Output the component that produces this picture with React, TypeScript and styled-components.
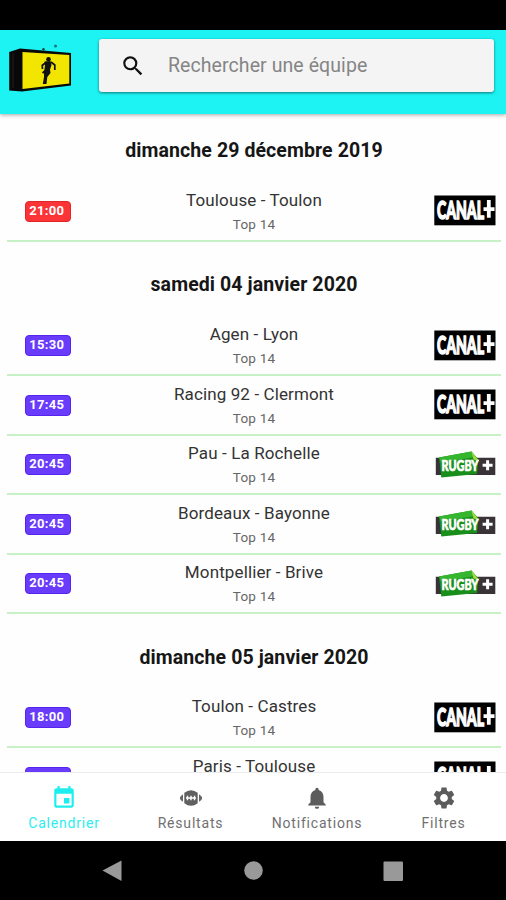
import React from "react";
import styled, { createGlobalStyle } from "styled-components";
import { MdEvent, MdNotifications, MdSearch, MdSettings } from "react-icons/md";

const GlobalStyle = createGlobalStyle`
  * { box-sizing: border-box; }
  html, body { margin: 0; padding: 0; background: #000; }
  body { font-family: Roboto, "Liberation Sans", sans-serif; }
`;

const Screen = styled.div`
  display: flex;
  flex-direction: column;
  width: 506px;
  height: 900px;
  overflow: hidden;
  background: #fefefe;
`;

const StatusBar = styled.div`
  flex: 0 0 29.5px;
  background: #000;
`;

const Header = styled.header`
  flex: 0 0 84px;
  display: flex;
  align-items: flex-start;
  padding: 9.5px 12px 0 8px;
  background: #1ef3f3;
  box-shadow: 0 1px 4px rgba(0, 0, 0, 0.35);
  z-index: 1;
`;

const Logo = styled.svg`
  flex: 0 0 66px;
  height: 54px;
  margin-right: 25px;
`;

const SearchField = styled.label`
  flex: 1;
  display: flex;
  align-items: center;
  height: 53px;
  padding-left: 21px;
  border-radius: 3px;
  background: #f4f4f4;
  box-shadow: 0 1px 3px rgba(0, 40, 40, 0.6);

  svg {
    flex: none;
    width: 26px;
    height: 26px;
    margin-right: 22px;
    color: #111;
  }
`;

const SearchInput = styled.input`
  flex: 1;
  min-width: 0;
  padding: 0;
  border: 0;
  outline: 0;
  background: transparent;
  font: 400 19.5px Roboto, sans-serif;
  letter-spacing: 0.08px;

  &::placeholder { color: #858585; opacity: 1; }
`;

const List = styled.main`
  flex: 1;
  min-height: 0;
  overflow: hidden;
  padding: 0 5px 0 7px;
  margin-top: -6px;
`;

const DayTitle = styled.h2`
  height: 74.8px;
  margin: 0;
  padding-top: 31.5px;
  text-align: center;
  font-size: 19.5px;
  line-height: 24px;
  font-weight: 700;
  letter-spacing: 0.1px;
  color: #161616;
`;

const Row = styled.div`
  display: grid;
  grid-template-columns: 82px 1fr 82px;
  height: 59.5px;
  border-bottom: 2px solid #c5f1c4;
`;

const TimeBadge = styled.span<{ $live?: boolean }>`
  justify-self: start;
  width: 46.5px;
  height: 21px;
  margin: 18.5px 0 0 17.5px;
  border: 1px solid ${(p) => (p.$live ? "#e32528" : "#5525ee")};
  border-radius: 4px;
  background: ${(p) => (p.$live ? "#fb3438" : "#693bfb")};
  color: #fff;
  font-size: 13px;
  line-height: 18px;
  font-weight: 700;
  letter-spacing: 0.3px;
  text-align: center;
  padding-right: 2px;
`;

const Fixture = styled.div`
  padding-top: 6.6px;
  text-align: center;
  white-space: nowrap;
`;

const Teams = styled.div`
  font-size: 17px;
  line-height: 22px;
  letter-spacing: 0.12px;
  color: #333;
`;

const Competition = styled.div`
  margin-top: 3px;
  font-size: 13.5px;
  line-height: 20px;
  letter-spacing: 0.2px;
  color: #666;
`;

const Channel = styled.svg`
  justify-self: end;
  width: 62px;
  height: 31px;
  margin: 13px 5.5px 0 0;
  overflow: visible;
`;

const TabBar = styled.nav`
  flex: 0 0 69.5px;
  display: grid;
  grid-template-columns: repeat(4, 1fr);
  border-top: 1px solid #ececec;
  background: #fff;
  z-index: 1;
`;

const Tab = styled.div<{ $active?: boolean }>`
  display: flex;
  flex-direction: column;
  align-items: center;
  padding: 12px 0 0 1.5px;
  color: ${(p) => (p.$active ? "#2ceeee" : "#707070")};
  font-size: 14px;
  line-height: 18px;
  letter-spacing: 0.8px;

  svg {
    width: 26px;
    height: 26px;
    margin-bottom: 3px;
    color: ${(p) => (p.$active ? "#1eeeee" : "#5c5c5c")};
  }
`;

const SystemBar = styled.div`
  flex: 0 0 59px;
  background: #000;

  svg { display: block; }
`;

function AppLogo() {
  return (
    <Logo viewBox="0 0 66 54">
      <path d="M1.2 13 12 9.5 63 14V46.5L14 52.5 1.2 51.5Z" fill="#080808" />
      <path d="M5 14v35" stroke="#202020" strokeWidth="1" />
      <path d="M14.5 13 61.3 16V44.5L14.5 50Z" fill="#f2e600" />
      <circle cx="35.5" cy="10.2" r="1.2" fill="#163c3c" />
      <circle cx="47.5" cy="7" r="1.5" fill="#147878" />
      <circle cx="40.5" cy="20.3" r="2.3" fill="#111" />
      <path d="M36.5 22.5 42.5 22 43.5 26 42 30.5 42.5 34 39.3 38 38.5 45 34.8 45 36 38 36 33 36.5 30 37 26Z" fill="#111" />
      <path d="M38.5 23 34.2 26.5 34.5 30M43 23l3.8 3v5M38 31l-3.5 3" fill="none" stroke="#111" strokeWidth="1.7" />
    </Logo>
  );
}

function CanalPlus() {
  return (
    <Channel viewBox="0 0 62 31">
      <rect x=".3" y=".5" width="61.2" height="29.8" fill="#000" />
      <text
        x="3"
        y="24"
        textLength="47"
        lengthAdjust="spacingAndGlyphs"
        fill="#fff"
        stroke="#fff"
        strokeWidth="1.5"
        fontFamily="Lato, sans-serif"
        fontWeight="900"
        fontSize="24"
      >
        CANAL
      </text>
      <path d="M54.8 5v17.8M49.5 14.2h11" stroke="#fff" strokeWidth="3.8" />
    </Channel>
  );
}

function RugbyPlus() {
  return (
    <Channel viewBox="0 0 62 31">
      <path d="M1.8 8.7H61.3V26H1.8Z" fill="#393337" />
      <path d="M5 8.5 37.5 2.6 44.5 10.5 43 25 7.3 28.5Z" fill="#188f1b" />
      <path d="M5 8.5 37.5 2.6 41 8 7 13.5Z" fill="#36b52f" />
      <path d="M37.5 2.6 45.5 12.5 39.5 10.5Z" fill="#a0d943" />
      <text
        x="7.5"
        y="21.6"
        textLength="37"
        lengthAdjust="spacingAndGlyphs"
        fill="#fff"
        stroke="#fff"
        strokeWidth=".7"
        fontFamily="Lato, sans-serif"
        fontWeight="900"
        fontSize="15"
      >
        RUGBY
      </text>
      <path d="M53.6 11.2v10M48.6 16.2h10" stroke="#fff" strokeWidth="3" />
    </Channel>
  );
}

function RugbyBall() {
  return (
    <svg viewBox="0 0 26 26">
      <path d="M6.3 7.8Q13 2.8 19.7 7.8V18.2Q13 23.2 6.3 18.2Z" fill="#606060" />
      <path d="M5 9.2Q-1.4 13 5 16.8ZM21 9.2Q27.4 13 21 16.8Z" fill="#666" />
      <path d="M8 13h10M9.5 10.8v4.4M13 10.8v4.4M16.5 10.8v4.4" stroke="#fff" strokeWidth="1.4" />
    </svg>
  );
}

type Match = { time: string; teams: string; channel: "canal" | "rugby"; live?: boolean };

const days: { title: string; matches: Match[] }[] = [
  {
    title: "dimanche 29 décembre 2019",
    matches: [{ time: "21:00", teams: "Toulouse - Toulon", channel: "canal", live: true }],
  },
  {
    title: "samedi 04 janvier 2020",
    matches: [
      { time: "15:30", teams: "Agen - Lyon", channel: "canal" },
      { time: "17:45", teams: "Racing 92 - Clermont", channel: "canal" },
      { time: "20:45", teams: "Pau - La Rochelle", channel: "rugby" },
      { time: "20:45", teams: "Bordeaux - Bayonne", channel: "rugby" },
      { time: "20:45", teams: "Montpellier - Brive", channel: "rugby" },
    ],
  },
  {
    title: "dimanche 05 janvier 2020",
    matches: [
      { time: "18:00", teams: "Toulon - Castres", channel: "canal" },
      { time: "21:00", teams: "Paris - Toulouse", channel: "canal" },
    ],
  },
];

export default function App() {
  return (
    <Screen>
      <GlobalStyle />
      <StatusBar />
      <Header>
        <AppLogo />
        <SearchField>
          <MdSearch />
          <SearchInput placeholder="Rechercher une équipe" />
        </SearchField>
      </Header>
      <List>
        {days.map((day) => (
          <section key={day.title}>
            <DayTitle>{day.title}</DayTitle>
            {day.matches.map((m) => (
              <Row key={m.teams}>
                <TimeBadge $live={m.live}>{m.time}</TimeBadge>
                <Fixture>
                  <Teams>{m.teams}</Teams>
                  <Competition>Top 14</Competition>
                </Fixture>
                {m.channel === "canal" ? <CanalPlus /> : <RugbyPlus />}
              </Row>
            ))}
          </section>
        ))}
      </List>
      <TabBar>
        <Tab $active>
          <MdEvent />
          Calendrier
        </Tab>
        <Tab>
          <RugbyBall />
          Résultats
        </Tab>
        <Tab>
          <MdNotifications />
          Notifications
        </Tab>
        <Tab>
          <MdSettings />
          Filtres
        </Tab>
      </TabBar>
      <SystemBar>
        <svg width="506" height="59" viewBox="0 0 506 59" fill="#999">
          <path d="M102.5 29.5 121.5 19.5V40Z" />
          <circle cx="253.5" cy="29.5" r="9.3" />
          <rect x="383.5" y="20.5" width="19.5" height="19.5" rx="1" />
        </svg>
      </SystemBar>
    </Screen>
  );
}
